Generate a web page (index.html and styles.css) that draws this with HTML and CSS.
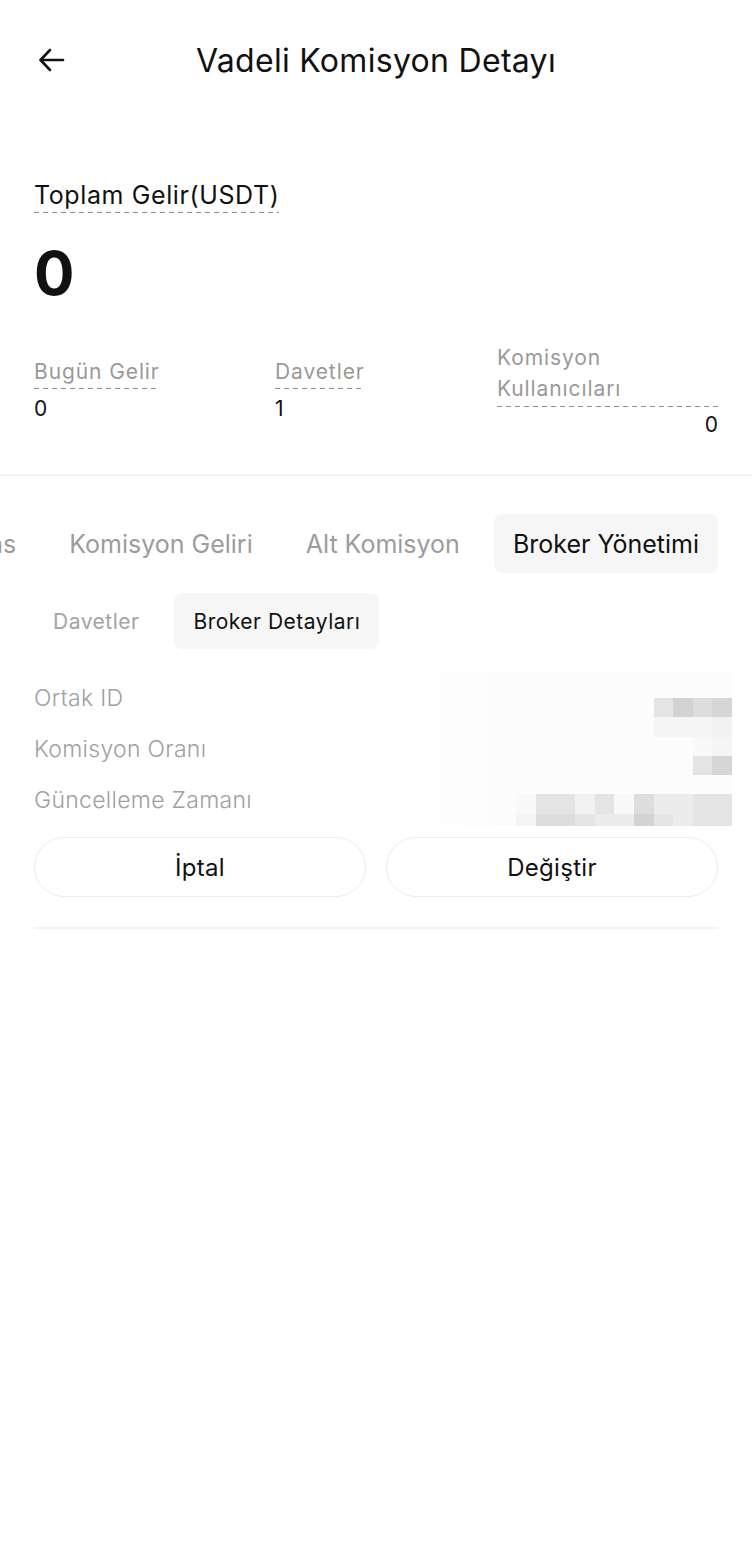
FILE: index.html
```html
<!DOCTYPE html>
<html lang="tr">
<head>
<meta charset="utf-8">
<title>Vadeli Komisyon Detayı</title>
<link rel="stylesheet" href="styles.css">
</head>
<body>
<div class="page">
  <header class="header">
    <div class="back">
      <svg width="30" height="30" viewBox="0 0 30 30" fill="none" stroke="#111" stroke-width="2.6" stroke-linecap="round" stroke-linejoin="round">
        <path d="M26 15H4"/>
        <path d="M13 5L3.5 15L13 25"/>
      </svg>
    </div>
    <h1 class="title">Vadeli Komisyon Detayı</h1>
    <div></div>
  </header>

  <section class="summary">
    <div class="total-label"><span class="dashed">Toplam Gelir(USDT)</span></div>
    <div class="total-value">0</div>
    <div class="stats">
      <div class="stat">
        <span class="stat-label dashed">Bugün Gelir</span>
        <span class="stat-value">0</span>
      </div>
      <div class="stat">
        <span class="stat-label dashed">Davetler</span>
        <span class="stat-value">1</span>
      </div>
      <div class="stat stat-wide">
        <span class="stat-label dashed">Komisyon Kullanıcıları</span>
        <span class="stat-value">0</span>
      </div>
    </div>
  </section>

  <div class="divider"></div>

  <nav class="tabs">
    <div class="tab-track">
      <div class="tab">Referans</div>
      <div class="tab">Komisyon Geliri</div>
      <div class="tab">Alt Komisyon</div>
      <div class="tab active">Broker Yönetimi</div>
    </div>
  </nav>

  <div class="subtabs">
    <div class="subtab">Davetler</div>
    <div class="subtab active">Broker Detayları</div>
  </div>

  <section class="details">
    <div class="labels">
      <div class="label">Ortak ID</div>
      <div class="label">Komisyon Oranı</div>
      <div class="label">Güncelleme Zamanı</div>
    </div>
    <div class="mosaic">
      <div class="mrow r-top"></div>
      <div class="mrow">
        <i class="c3"></i><i class="c1"></i><i class="c2"></i><i class="c1b"></i>
      </div>
      <div class="mrow">
        <i class="c6"></i><i class="c6"></i><i class="c6"></i><i class="c5"></i>
      </div>
      <div class="mrow">
        <i class="c7"></i><i class="c6"></i>
      </div>
      <div class="mrow">
        <i class="c3"></i><i class="c1b"></i>
      </div>
      <div class="mrow"></div>
      <div class="mrow">
        <i class="c7"></i><i class="c3"></i><i class="c3"></i><i class="c5"></i><i class="c3"></i><i class="c7"></i><i class="c2"></i><i class="c4"></i><i class="c4"></i><i class="c3"></i><i class="c3"></i>
      </div>
      <div class="mrow r-bot">
        <i class="c6"></i><i class="c2"></i><i class="c2"></i><i class="c3"></i><i class="c4"></i><i class="c4"></i><i class="c1"></i><i class="c3"></i><i class="c4"></i><i class="c3"></i><i class="c3"></i>
      </div>
    </div>
  </section>

  <div class="actions">
    <button class="btn">İptal</button>
    <button class="btn">Değiştir</button>
  </div>

  <div class="divider inset"></div>
</div>
</body>
</html>
```

FILE: styles.css
```css
* { box-sizing: border-box; }

html, body {
  margin: 0;
  padding: 0;
  background: #fff;
}

body {
  font-family: Inter, "Noto Sans", "Liberation Sans", sans-serif;
  color: #111;
}

.page {
  width: 752px;
  min-height: 1548px;
  overflow: hidden;
}

.header {
  height: 120px;
  display: grid;
  grid-template-columns: 1fr auto 1fr;
  align-items: center;
  padding: 0 34px;
}

.back {
  display: flex;
  align-items: center;
  padding-left: 3px;
}

.title {
  margin: 0;
  font-size: 32px;
  font-weight: 400;
  letter-spacing: 0.3px;
}

.summary {
  padding: 0 34px;
}

.dashed {
  background-image: linear-gradient(to right, #8f8f8f 60%, transparent 0);
  background-size: 9px 1.5px;
  background-repeat: repeat-x;
  background-position: left bottom;
  padding-bottom: 3px;
}

.total-label {
  margin-top: 60px;
  font-size: 25px;
  line-height: 30px;
  letter-spacing: 0.6px;
  color: #111;
}

.total-value {
  margin-top: 32px;
  font-size: 60px;
  font-weight: 700;
  line-height: 62px;
}

.stats {
  margin-top: 38px;
  display: grid;
  grid-template-columns: 241px 222px 1fr;
  align-items: center;
}

.stat {
  display: flex;
  flex-direction: column;
  align-items: flex-start;
}

.stat-label {
  font-size: 21px;
  line-height: 28px;
  letter-spacing: 0.9px;
  color: #999;
}

.stat-value {
  margin-top: 8px;
  font-size: 21px;
  line-height: 24px;
  color: #111;
}

.stat-wide {
  align-items: stretch;
}

.stat-wide .stat-label {
  line-height: 31px;
  padding-right: 40px;
}

.stat-wide .stat-value {
  text-align: right;
  margin-top: 6px;
}

.divider {
  height: 2px;
  background: #f3f3f3;
  margin-top: 37px;
}

.divider.inset {
  margin: 30px 34px 0;
  height: 1.5px;
}

.tabs {
  margin-top: 38px;
  overflow: hidden;
}

.tab-track {
  display: flex;
  justify-content: flex-end;
  gap: 15px;
  padding-right: 34px;
}

.tab {
  flex: none;
  height: 59px;
  display: flex;
  align-items: center;
  padding: 0 19px;
  border-radius: 8px;
  font-size: 25px;
  color: #9c9c9c;
  white-space: nowrap;
}

.tab.active {
  background: #f6f6f6;
  color: #111;
}

.subtabs {
  margin-top: 20px;
  padding: 0 34px;
  display: flex;
  gap: 16px;
}

.subtab {
  height: 56px;
  display: flex;
  align-items: center;
  padding: 0 19px;
  border-radius: 8px;
  font-size: 21px;
  letter-spacing: 0.5px;
  color: #a3a3a3;
}

.subtab.active {
  background: #f6f6f6;
  color: #111;
}

.details {
  margin-top: 23px;
  padding: 0 34px;
  display: flex;
  justify-content: space-between;
}

.labels {
  display: flex;
  flex-direction: column;
}

.label {
  height: 51px;
  display: flex;
  align-items: center;
  font-size: 23px;
  font-weight: 300;
  letter-spacing: 0.3px;
  color: #a0a0a0;
}

.mosaic {
  width: 294px;
  height: 154px;
  margin-right: -14px;
  background: linear-gradient(to right, #fefefe, #fcfcfc 20%, #fcfcfc);
  display: flex;
  flex-direction: column;
}

.mrow {
  height: 19.3px;
  display: flex;
  justify-content: flex-end;
}

.mrow.r-top { height: 26px; }
.mrow.r-bot { height: 12px; }

.mrow i {
  display: block;
  width: 19.6px;
  height: 100%;
}

.c1 { background: #d3d3d3; }
.c1b { background: #d6d6d6; }
.c2 { background: #dddddd; }
.c3 { background: #e4e4e4; }
.c4 { background: #ececec; }
.c5 { background: #f1f1f1; }
.c6 { background: #f5f5f5; }
.c7 { background: #f9f9f9; }

.actions {
  margin-top: 11px;
  padding: 0 34px;
  display: grid;
  grid-template-columns: 1fr 1fr;
  gap: 20px;
}

.btn {
  height: 60px;
  border: 1.5px solid #ececec;
  border-radius: 30px;
  background: #fff;
  font-family: inherit;
  font-size: 24px;
  letter-spacing: 0.3px;
  color: #111;
  padding: 0;
}
```
